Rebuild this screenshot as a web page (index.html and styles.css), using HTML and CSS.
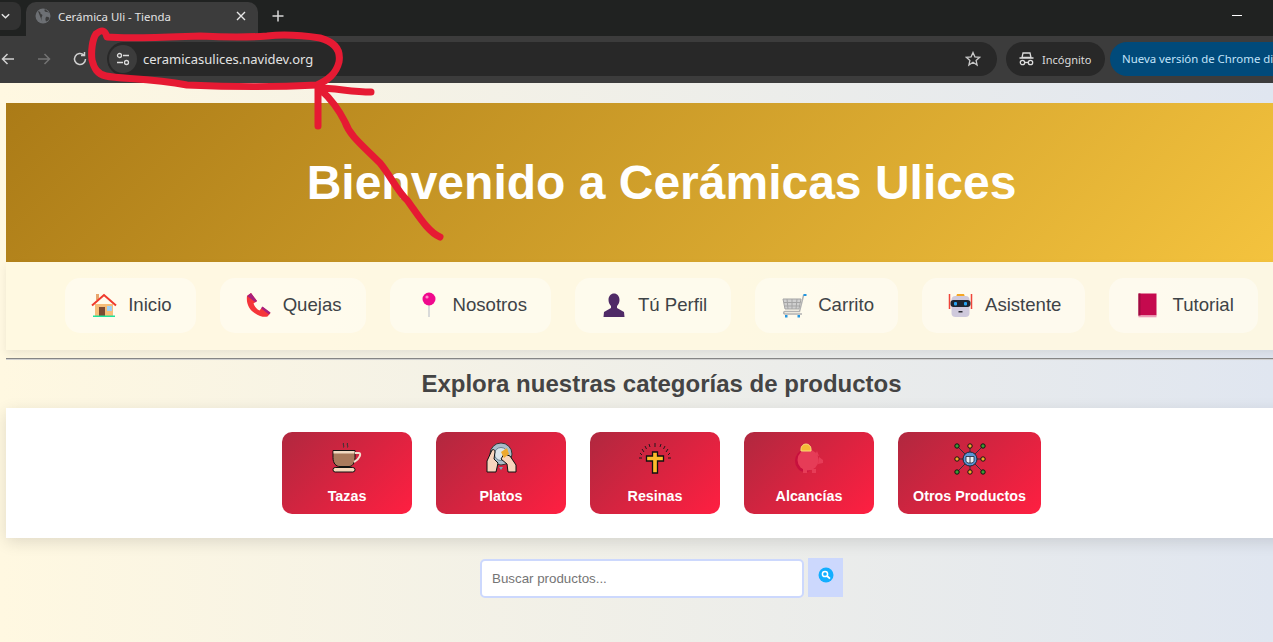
FILE: index.html
```html
<!DOCTYPE html>
<html lang="es">
<head>
<meta charset="utf-8">
<title>Cerámica Uli - Tienda</title>
<link rel="stylesheet" href="styles.css">
</head>
<body>
<div class="browser">
  <div class="tabstrip">
    <div class="tabmenu"><svg width="12" height="12" viewBox="0 0 12 12"><path d="M2 4l4 4 4-4" fill="none" stroke="#e3e3e3" stroke-width="1.6"/></svg></div>
    <div class="tab">
      <svg class="favicon" width="16" height="16" viewBox="0 0 16 16"><circle cx="8" cy="8" r="7.500" fill="#6d7074"/><path d="M3 3c2 .5 3 1.500 2.500 3 1.500 0 2.500 1 1.500 2.500-1 1-.5 3 .5 6M10 1c-1 1.500-.5 2.500 1 3 1.500 0 2.500 0 4 1.500M11 9c1-.5 2.500 0 3.500 1-.5 2-1.500 3-3.500 3.500-.5-1.500-1-3 0-4.500z" fill="#3c3c3c"/></svg>
      <span class="tabtitle">Cerámica Uli - Tienda</span>
      <svg class="tabclose" width="12" height="12" viewBox="0 0 12 12"><path d="M2 2l8 8M10 2l-8 8" stroke="#e6e6e6" stroke-width="1.400"/></svg>
    </div>
    <svg class="newtab" width="14" height="14" viewBox="0 0 14 14"><path d="M7 1.500v11M1.500 7h11" stroke="#d6d6d6" stroke-width="1.500"/></svg>
    <div class="winmin"></div>
  </div>
  <div class="toolbar">
    <svg class="navbtn nb-back" width="16" height="16" viewBox="0 0 16 16"><path d="M14 8H3M7.500 3L2.500 8l5 5" fill="none" stroke="#d0d0d0" stroke-width="1.500"/></svg>
    <svg class="navbtn nb-fwd" width="16" height="16" viewBox="0 0 16 16"><path d="M2 8h11M8.500 3l5 5-5 5" fill="none" stroke="#737373" stroke-width="1.500"/></svg>
    <svg class="navbtn nb-reload" width="16" height="16" viewBox="0 0 16 16"><path d="M13.500 8a5.500 5.500 0 1 1-1.700-4M12.500 1v3.500H9" fill="none" stroke="#d0d0d0" stroke-width="1.500"/></svg>
    <div class="omnibox">
      <div class="siteinfo"><svg width="16" height="16" viewBox="0 0 16 16"><circle cx="4.500" cy="4.500" r="2" fill="none" stroke="#dcdcdc" stroke-width="1.300"/><path d="M8 4.500h6M2 11.500h6" stroke="#dcdcdc" stroke-width="1.300"/><circle cx="11.500" cy="11.500" r="2" fill="none" stroke="#dcdcdc" stroke-width="1.300"/></svg></div>
      <span class="url">ceramicasulices.navidev.org</span>
      <svg class="star" width="16" height="16" viewBox="0 0 16 16"><path d="M8 1.500l1.900 4.300 4.700.5-3.500 3.100 1 4.600L8 11.200l-4.100 2.800 1-4.600L1.400 6.300l4.700-.5z" fill="none" stroke="#c8c8c8" stroke-width="1.300"/></svg>
    </div>
    <div class="incognito">
      <svg width="15" height="14" viewBox="0 0 15 14"><path d="M4 1h7l1 4.500H3zM.5 6h14" fill="none" stroke="#dcdcdc" stroke-width="1.300"/><circle cx="3.500" cy="10.500" r="2.200" fill="none" stroke="#dcdcdc" stroke-width="1.300"/><circle cx="11.500" cy="10.500" r="2.200" fill="none" stroke="#dcdcdc" stroke-width="1.300"/><path d="M5.700 10.500h3.600" stroke="#dcdcdc" stroke-width="1.300"/></svg>
      <span>Incógnito</span>
    </div>
    <div class="update">Nueva versión de Chrome disponible</div>
  </div>
</div>

<main class="page">
  <header class="hero"><h1>Bienvenido a Cerámicas Ulices</h1></header>

  <nav class="menu">
    <a class="menu-item"><svg class="menu-icon" viewBox="0 0 30 30"><path d="M7 4h3v6H7z" fill="#e8a66c"/><path d="M6 14h18v12H6z" fill="#f6bd79"/><path d="M10 17h6v9h-6z" fill="#7b4a33"/><path d="M18 16h5v5h-5z" fill="#9fd0f5"/><path d="M3 15.500L15 5l12 10.500" fill="none" stroke="#ef3b2d" stroke-width="2"/><path d="M4 25.500h22v1.500H4z" fill="#1fe39a"/></svg>Inicio</a>
    <a class="menu-item"><svg class="menu-icon" viewBox="0 0 30 30"><path d="M3 6l4-3 6 8-3.500 2.500c1 3 3 5.500 6 7l3-3.500 8 6-3 3.500c-3 1-8 0-13-3.500S2 14 3 6z" fill="#f5353a"/><path d="M3 6l4-3 6 8-1.500 1.200zM18.500 16.500l8 6-1.500 2-8-6.200z" fill="#a81f7d"/></svg>Quejas</a>
    <a class="menu-item"><svg class="menu-icon" viewBox="0 0 30 30"><path d="M14.300 14h1.400v13h-1.400z" fill="#c9ccd1"/><circle cx="15" cy="9" r="6.500" fill="#f0098d"/><circle cx="13" cy="7" r="1.600" fill="#ff8cc8"/></svg>Nosotros</a>
    <a class="menu-item"><svg class="menu-icon" viewBox="0 0 30 30"><path d="M9.500 10c0-4 2.500-6.500 5.500-6.500s5.500 2.500 5.500 6.500c0 3-1.500 5-2.500 6v2l7 4 .5 5h-21l.5-5 7-4v-2c-1-1-2.500-3-2.500-6z" fill="#4f2a66"/></svg>Tú Perfil</a>
    <a class="menu-item"><svg class="menu-icon" viewBox="0 0 30 30"><path d="M4 9h18l-2 10H6z" fill="#cfcfcf" stroke="#a5a5a5"/><path d="M8 9l1 10M13 9v10M18 9l-1 10M5 12.500h16.500M5.500 16h15.500" stroke="#a5a5a5" fill="none"/><path d="M26 5l-1.500.5-4 16H6c-1.500 0-2 2.500 0 2.500h17" fill="none" stroke="#b2b2b2" stroke-width="1.500"/><path d="M24.500 4h3v2h-3zM6 25h2.500v2.500H6zM18.500 25H21v2.500h-2.500z" fill="#2296e0"/></svg>Carrito</a>
    <a class="menu-item"><svg class="menu-icon" viewBox="0 0 30 30"><path d="M3.500 4v15M25.500 4v15" stroke="#f0443a" stroke-width="1.500"/><path d="M11 4h7l1 3h-9z" fill="#f5a623"/><rect x="5.500" y="6" width="18" height="21" rx="4" fill="#cfc9dc"/><rect x="4.500" y="10" width="20" height="7" rx="3" fill="#1e2530"/><rect x="8" y="12" width="3" height="3.500" rx="1" fill="#27a4f2"/><rect x="18" y="12" width="3" height="3.500" rx="1" fill="#27a4f2"/><path d="M12.500 21h4v1.500h-4z" fill="#2b2b33"/></svg>Asistente</a>
    <a class="menu-item"><svg class="menu-icon" viewBox="0 0 30 30"><rect x="5.500" y="3.500" width="18" height="22" fill="#c50a4e"/><path d="M5.500 3.500h2v22.500h-2z" fill="#9d0b40"/><path d="M5.500 25.500h18v1.800h-18z" fill="#ee9db8"/></svg>Tutorial</a>
  </nav>

  <hr class="rule">
  <h2 class="title">Explora nuestras categorías de productos</h2>

  <section class="cats">
    <a class="cat cat-s">
      <svg class="cat-icon" viewBox="0 0 34 34"><path d="M13.500 1c-1 1.500 1 2.500 0 4.500M17.500 1c-1 1.500 1 2.500 0 4.500" fill="none" stroke="#333" stroke-width="1"/><path d="M3 8.500h22v7c0 6-3 9-6 9h-9c-4 0-7-3-7-9z" fill="#a97a5c" stroke="#111" stroke-width="1"/><path d="M3.500 9h21v2.500h-21z" fill="#f1d8c0"/><path d="M25 11h4c2.500 0 1 6-5 9" fill="none" stroke="#f1e1d0" stroke-width="2"/><rect x="3" y="25.500" width="22" height="4.500" rx="2.200" fill="#f6d8bb" stroke="#111"/></svg>
      <span>Tazas</span>
    </a>
    <a class="cat cat-s">
      <svg class="cat-icon" viewBox="0 0 34 34"><circle cx="17" cy="12" r="11" fill="#a8bcc9" stroke="#333"/><circle cx="17" cy="12" r="6.500" fill="#dbe5ea" stroke="#69808f"/><path d="M19 25h-4l2 3z" fill="#7ea3bb"/><path d="M3 30V19l5-11c2-1 3 0 3 2l-1 7 4 4-2 9z" fill="#f8d5bd" stroke="#111"/><path d="M32 30v-7l-6-9-6-2-3 5 6 5 1 8z" fill="#f8d5bd" stroke="#111"/><path d="M17 10l6-4 2 6-5 4z" fill="#eda92f"/></svg>
      <span>Platos</span>
    </a>
    <a class="cat cat-s">
      <svg class="cat-icon" viewBox="0 0 34 34"><path d="M14.500 10h5v4h6v5h-6v12h-5V19h-6v-5h6z" fill="#fbbc2c" stroke="#111" stroke-width="1.300"/><path d="M17 1v4M11 2l1 3M23 2l-1 3M7 4l1.500 3M27 4l-1.500 3M4 7l2 3M30 7l-2 3M2 11l2 2M32 11l-2 2M1 16h3M30 16h3" stroke="#23181c" stroke-width="1"/></svg>
      <span>Resinas</span>
    </a>
    <a class="cat cat-s">
      <svg class="cat-icon" viewBox="0 0 34 34"><ellipse cx="13" cy="19" rx="10" ry="11" fill="#c7103d"/><circle cx="16" cy="18" r="10.500" fill="#e63c57"/><path d="M25 9l2 5-4-1zM27 15l4 3v3l-5 1zM11 27h4v4h-4zM20 27h4v4h-4z" fill="#e63c57"/><path d="M9 7a5 5 0 0 1 10 0v2H9z" fill="#f4bb36" stroke="#f9d878"/></svg>
      <span>Alcancías</span>
    </a>
    <a class="cat cat-w">
      <svg class="cat-icon" viewBox="0 0 34 34"><path d="M4 4l26 26M30 4L4 30M17 3v28M3 17h28" stroke="#33303a" stroke-width="1"/><circle cx="17" cy="17" r="7" fill="#5b96d6" stroke="#1d2433"/><path d="M13 14.500h8v5l-2 1.500h-4l-2-1.500zM17 14.500V21" fill="#ecf0f5" stroke="#1d2433" stroke-width=".8"/><g stroke="#111" stroke-width="1"><circle cx="4" cy="4" r="2.200" fill="#3d9a33"/><circle cx="17" cy="4" r="2.200" fill="#f0a928"/><circle cx="30" cy="4" r="2.200" fill="#3d9a33"/><circle cx="4" cy="17" r="2.200" fill="#f0a928"/><circle cx="30" cy="17" r="2.200" fill="#f0a928"/><circle cx="4" cy="30" r="2.200" fill="#3d9a33"/><circle cx="17" cy="30" r="2.200" fill="#f0a928"/><circle cx="30" cy="30" r="2.200" fill="#3d9a33"/></g></svg>
      <span>Otros Productos</span>
    </a>
  </section>

  <form class="search">
    <input class="search-input" type="text" placeholder="Buscar productos...">
    <button class="search-btn" type="button"><svg width="16" height="16" viewBox="0 0 16 16"><circle cx="8" cy="8" r="7.500" fill="#12aeff"/><circle cx="7" cy="7" r="2.600" fill="none" stroke="#fff" stroke-width="1.500"/><path d="M9 9l3 2.700" stroke="#fff" stroke-width="1.800"/></svg></button>
  </form>
</main>

<svg class="scribble" width="1273" height="642" viewBox="0 0 1273 642">
  <path d="M107 37C105 30 102 29 96 34C92 40 91 52 92 60C94 68 97 74 106 76C120 79 150 78 187 85C230 87 280 87 317 85C328 80 336 74 339 62C341 50 335 42 320 38C300 35 285 34 267 36C240 38 220 37 200 36C170 37 130 39 107 37Z" fill="none" stroke="#e61a33" stroke-width="7" stroke-linecap="round" stroke-linejoin="round"/>
  <path d="M318 126V88C335 88 352 92 371 92M321 90C332 100 338 108 345 122C350 136 362 145 380 163C390 175 398 192 407 200C418 215 428 232 440 237" fill="none" stroke="#e61a33" stroke-width="7" stroke-linecap="round" stroke-linejoin="round"/>
</svg>
</body>
</html>
```
FILE: styles.css
```css
* { box-sizing: border-box; }
html, body { margin: 0; height: 642px; overflow: hidden; }
body {
  position: relative;
  width: 1273px;
  font-family: "Liberation Sans", Arial, sans-serif;
  background: #fff;
}

.browser { width: 1273px; height: 83px; font-family: "Noto Sans", "Open Sans", sans-serif; overflow: hidden; }

.tabstrip { height: 36px; background: #202221; display: flex; align-items: flex-start; position: relative; }
.tabmenu { width: 21px; height: 28px; margin-top: 2px; background: #323232; border-radius: 0 8px 8px 0; display: flex; align-items: center; justify-content: flex-end; padding-right: 10px; flex: none; }
.tab { width: 232px; height: 34px; margin: 2px 0 0 5px; padding: 0 11px 6px 9px; background: #3c3c3c; border-radius: 10px 10px 0 0; display: flex; align-items: center; color: #e3e3e3; font-size: 11.4px; flex: none; }
.favicon { flex: none; }
.tabtitle { margin-left: 7px; flex: 1; white-space: nowrap; }
.tabclose { flex: none; }
.newtab { margin: 9px 0 0 13px; flex: none; }
.winmin { position: absolute; left: 1232px; top: 15px; width: 10px; height: 1px; background: #fff; }

.toolbar { height: 47px; padding-bottom: 1px; background: #3c3c3c; display: flex; align-items: center; }
.navbtn { flex: none; }
.nb-fwd { margin-left: 20px; }
.nb-reload { margin-left: 20px; }
.omnibox { margin-left: 19px; width: 890px; height: 34px; border-radius: 17px; background: #282828; display: flex; align-items: center; padding: 0 16px 0 2px; flex: none; }
.siteinfo { width: 28px; height: 28px; border-radius: 50%; background: #3c3c3c; display: flex; align-items: center; justify-content: center; flex: none; }
.url { margin-left: 6px; color: #e3e3e3; font-size: 13px; flex: 1; white-space: nowrap; }
.star { flex: none; }
.incognito { margin-left: 9px; width: 99px; height: 34px; border-radius: 17px; background: #282828; color: #dcdcdc; font-size: 11px; display: flex; align-items: center; padding-left: 13px; gap: 8px; flex: none; }
.update { margin-left: 5px; width: 200px; height: 34px; border-radius: 17px 0 0 17px; background: #014a7a; color: #c2e4fb; font-size: 11.400px; line-height: 34px; padding-left: 12px; white-space: nowrap; flex: none; }

.page {
  height: 559px;
  padding: 20px 0 0 6px;
  background: linear-gradient(90deg, #fff8e1 0%, #e0e6f0 100%);
  overflow: hidden;
}
.page > * { width: 1311px; }

.hero { height: 159px; background: linear-gradient(135deg, #ab7b17 0%, #f6c53f 100%); display: flex; align-items: center; justify-content: center; }
.hero h1 { margin: 0; color: #fff; font-size: 48px; font-weight: 700; line-height: 1; }

.menu { height: 88px; padding-bottom: 2px; background: rgba(255,248,225,.9); box-shadow: 0 4px 8px rgba(0,0,0,.07); display: flex; justify-content: center; align-items: center; gap: 24px; }
.menu-item { height: 55px; padding: 0 24px; background: rgba(255,255,255,.4); border-radius: 15px; display: flex; align-items: center; color: #3e4347; font-size: 18.600px; white-space: nowrap; }
.menu-icon { width: 30px; height: 30px; margin-right: 9px; flex: none; }

.rule { height: 2px; margin: 8px 0 0; border: 0; border-top: 1px solid #858585; border-bottom: 1px solid #cfcfcf; background: none; position: relative; }
.title { height: 48px; margin: 0; color: #444; font-size: 24px; font-weight: 700; line-height: 48px; text-align: center; }

.cats { height: 130px; background: #fff; box-shadow: 0 4px 15px rgba(0,0,0,.12); display: flex; justify-content: center; align-items: center; gap: 24px; }
.cat { height: 82px; border-radius: 10px; background: linear-gradient(135deg, #b0283f 0%, #ff1f41 100%); color: #fff; font-size: 14.300px; font-weight: 700; display: flex; flex-direction: column; align-items: center; padding-top: 10px; }
.cat-s { width: 130px; }
.cat-w { width: 143px; }
.cat-icon { width: 34px; height: 34px; flex: none; }
.cat span { margin-top: 10px; line-height: 20px; white-space: nowrap; }

.search { margin-top: 20px; height: 40px; display: flex; justify-content: center; align-items: center; gap: 4px; }
.search-input { width: 324px; height: 39px; padding: 0 10px; border: 2px solid #ccd8fd; border-radius: 5px; background: #fff; font: 13.333px "Liberation Sans", Arial, sans-serif; outline: 0; }
.search-input::placeholder { color: #757575; }
.search-btn { width: 35px; height: 39px; margin-top: -1px; padding: 0 0 5px; border: 0; background: #ccd8fd; display: flex; align-items: center; justify-content: center; }

.scribble { position: absolute; left: 0; top: 0; pointer-events: none; }
```
